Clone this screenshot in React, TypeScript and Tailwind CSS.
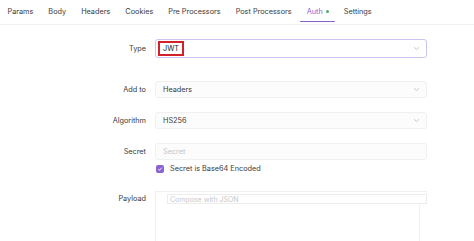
import React from 'react';

const tabs = ['Params', 'Body', 'Headers', 'Cookies', 'Pre Processors', 'Post Processors', 'Auth', 'Settings'];

const Chevron: React.FC = () => (
  <svg width="7" height="5" viewBox="0 0 7 5" className="shrink-0">
    <path d="M1 1.2 L3.5 3.6 L6 1.2" fill="none" stroke="#b8b8b8" strokeWidth="0.8" />
  </svg>
);

const Row: React.FC<{ label: string; children: React.ReactNode; className?: string }> = ({ label, children, className }) => (
  <div className={`flex items-center gap-[9px] ${className ?? ''}`}>
    <div className="w-[146px] text-right text-[#3a3a3a]">{label}</div>
    <div className="w-[272px]">{children}</div>
  </div>
);

const App: React.FC = () => {
  return (
    <div className="w-[474px] h-[241px] overflow-hidden bg-white font-[Inter,sans-serif] text-[7.3px] leading-none">
      {/* tabs */}
      <div className="flex h-[25px] border-b border-[#f2f2f2]">
        {tabs.map((t) => (
          <div
            key={t}
            className={`relative flex items-center px-[7.5px] pb-[1px] ${t === 'Auth' ? 'text-[#8a63d2]' : 'text-[#3a3a3a]'}`}
          >
            {t}
            {t === 'Auth' && <span className="ml-[3px] w-[3px] h-[3px] rounded-full bg-[#4fae66]" />}
            {t === 'Auth' && <span className="absolute left-[1px] right-[1px] bottom-[2px] h-[1.5px] rounded bg-[#8a63d2]" />}
          </div>
        ))}
      </div>

      <div className="flex flex-col">
        <Row label="Type" className="mt-[14px]">
          <div className="h-[19px] flex items-center justify-between pl-[2px] pr-[6px] rounded-[3px] border border-[#cfc2f2] bg-white">
            <div className="h-[15px] flex items-center px-[3px] w-[26px] border-2 border-[#d4202a] text-[#222]">JWT</div>
            <Chevron />
          </div>
        </Row>

        <Row label="Add to" className="mt-[23px]">
          <div className="h-[17px] flex items-center justify-between pl-[7px] pr-[6px] rounded-[3px] border border-[#f0f0f0] bg-[#fcfcfc] text-[#3a3a3a]">
            Headers
            <Chevron />
          </div>
        </Row>

        <Row label="Algorithm" className="mt-[14px]">
          <div className="h-[17px] flex items-center justify-between pl-[7px] pr-[6px] rounded-[3px] border border-[#f0f0f0] bg-[#fcfcfc] text-[#3a3a3a]">
            HS256
            <Chevron />
          </div>
        </Row>

        <Row label="Secret" className="mt-[14px]">
          <div className="h-[17px] flex items-center pl-[7px] rounded-[3px] border border-[#f0f0f0] bg-[#fcfcfc] text-[#c4c4c4]">
            Secret
          </div>
        </Row>

        <div className="flex items-center gap-[6px] mt-[5px] ml-[156px] text-[#3a3a3a]">
          <span className="w-[8px] h-[8px] rounded-[2px] bg-[#8a63d2] flex items-center justify-center">
            <svg width="6" height="6" viewBox="0 0 6 6">
              <path d="M1.2 3.1 L2.5 4.3 L4.8 1.7" fill="none" stroke="white" strokeWidth="0.9" />
            </svg>
          </span>
          Secret is Base64 Encoded
        </div>

        <div className="flex items-start gap-[9px] mt-[18px]">
          <div className="w-[146px] text-right text-[#3a3a3a] pt-[4px]">Payload</div>
          <div className="relative w-[272px] h-[60px] border-l border-t border-[#f0f0f0]">
            <div className="absolute right-[7px] top-[2px] bottom-0 w-px bg-[#f0f0f0]" />
            <div className="relative pl-[11px] pt-[2px]">
              <div className="h-[10px] flex items-center pl-[2px] border border-[#ececec] bg-white text-[#c8c8c8] text-[7px]">
                Compose with JSON
              </div>
            </div>
          </div>
        </div>
      </div>
    </div>
  );
};

export default App;
